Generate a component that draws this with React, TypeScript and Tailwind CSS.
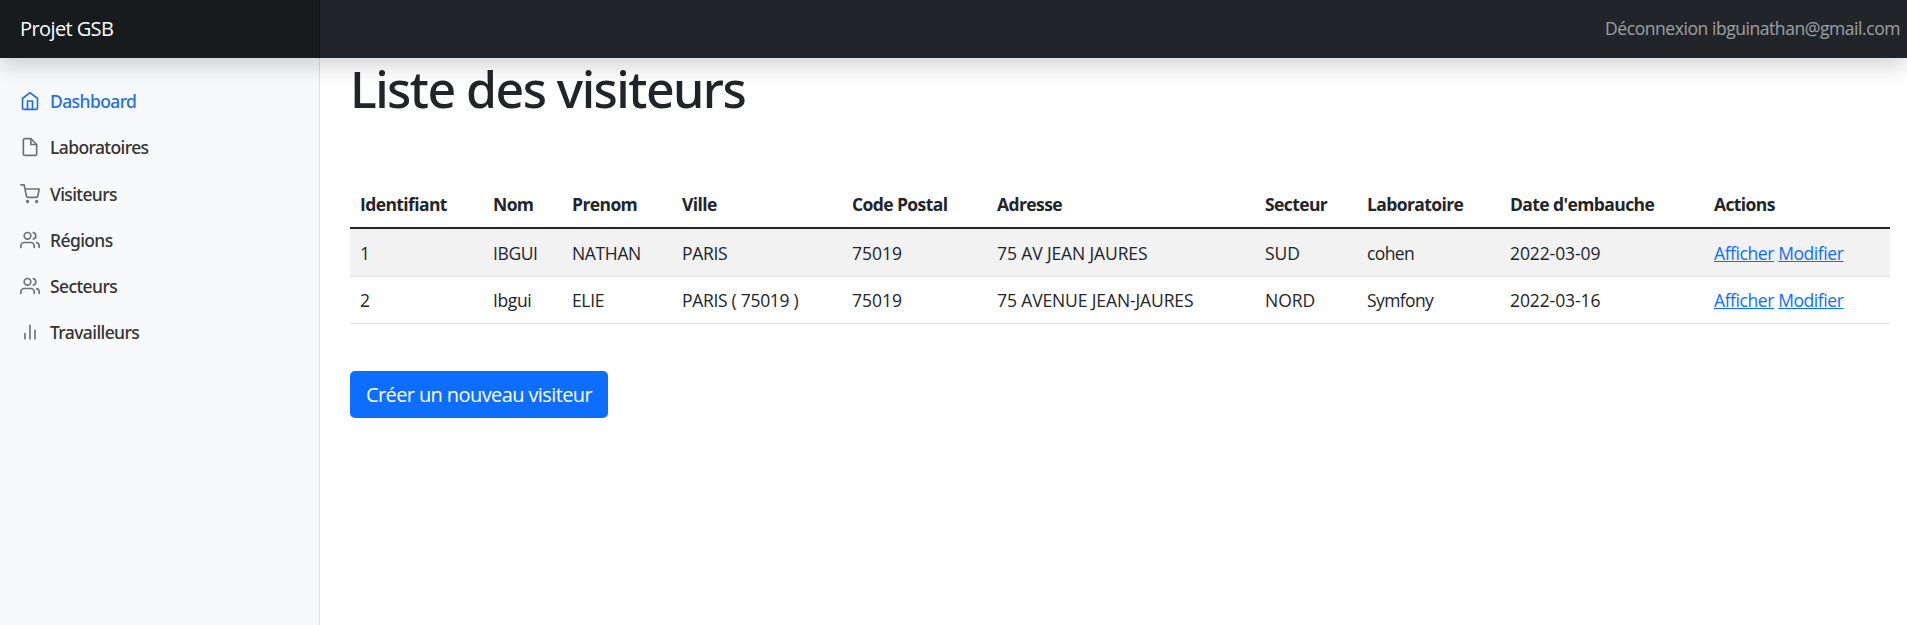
import type { ReactNode } from 'react';

const icons: Record<string, ReactNode> = {
  home: (
    <>
      <path d="M3 9l9-7 9 7v11a2 2 0 0 1-2 2H5a2 2 0 0 1-2-2z" />
      <polyline points="9 22 9 12 15 12 15 22" />
    </>
  ),
  file: (
    <>
      <path d="M13 2H6a2 2 0 0 0-2 2v16a2 2 0 0 0 2 2h12a2 2 0 0 0 2-2V9z" />
      <polyline points="13 2 13 9 20 9" />
    </>
  ),
  cart: (
    <>
      <circle cx="9" cy="21" r="1" />
      <circle cx="20" cy="21" r="1" />
      <path d="M1 1h4l2.68 13.39a2 2 0 0 0 2 1.61h9.72a2 2 0 0 0 2-1.61L23 6H6" />
    </>
  ),
  users: (
    <>
      <path d="M17 21v-2a4 4 0 0 0-4-4H5a4 4 0 0 0-4 4v2" />
      <circle cx="9" cy="7" r="4" />
      <path d="M23 21v-2a4 4 0 0 0-3-3.87" />
      <path d="M16 3.13a4 4 0 0 1 0 7.75" />
    </>
  ),
  chart: (
    <>
      <line x1="18" y1="20" x2="18" y2="10" />
      <line x1="12" y1="20" x2="12" y2="4" />
      <line x1="6" y1="20" x2="6" y2="14" />
    </>
  ),
};

function Icon({ name }: { name: string }) {
  return (
    <svg
      className="size-5 shrink-0"
      viewBox="0 0 24 24"
      fill="none"
      stroke="currentColor"
      strokeWidth="2"
      strokeLinecap="round"
      strokeLinejoin="round"
    >
      {icons[name]}
    </svg>
  );
}

const links = [
  { label: 'Dashboard', icon: 'home', active: true },
  { label: 'Laboratoires', icon: 'file' },
  { label: 'Visiteurs', icon: 'cart' },
  { label: 'Régions', icon: 'users' },
  { label: 'Secteurs', icon: 'users' },
  { label: 'Travailleurs', icon: 'chart' },
];

const columns = [
  { title: 'Identifiant', width: 'w-[133px]', tracking: '' },
  { title: 'Nom', width: 'w-[79px]', tracking: 'tracking-[-0.4px]' },
  { title: 'Prenom', width: 'w-[110px]', tracking: 'tracking-[-0.35px]' },
  { title: 'Ville', width: 'w-[170px]', tracking: 'tracking-[-0.3px]' },
  { title: 'Code Postal', width: 'w-[145px]', tracking: '' },
  { title: 'Adresse', width: 'w-[268px]', tracking: 'tracking-[-0.12px]' },
  { title: 'Secteur', width: 'w-[102px]', tracking: '' },
  { title: 'Laboratoire', width: 'w-[143px]', tracking: 'tracking-[-0.6px]' },
  { title: "Date d'embauche", width: 'w-[204px]', tracking: 'tracking-[-0.1px]' },
  { title: 'Actions', width: '', tracking: 'tracking-[-0.45px]' },
];

const rows = [
  ['1', 'IBGUI', 'NATHAN', 'PARIS', '75019', '75 AV JEAN JAURES', 'SUD', 'cohen', '2022-03-09'],
  ['2', 'Ibgui', 'ELIE', 'PARIS ( 75019 )', '75019', '75 AVENUE JEAN-JAURES', 'NORD', 'Symfony', '2022-03-16'],
];

export default function App() {
  return (
    <div className="flex h-[625px] flex-col overflow-hidden bg-white font-['Open_Sans',sans-serif] text-[17.5px] leading-[26.25px] text-[#212529]">
      <header className="relative z-10 flex h-[58px] shrink-0 items-center justify-between bg-[#212529] shadow-[0_10px_20px_rgba(0,0,0,0.15)]">
        <a className="flex h-full w-80 items-center bg-black/25 pb-px pl-5 text-xl tracking-[-0.6px] text-white shadow-[inset_-1px_0_0_rgba(0,0,0,0.25)]">
          Projet GSB
        </a>
        <a className="pr-[7px] pb-px tracking-[-0.44px] text-white/55">Déconnexion ibguinathan@gmail.com</a>
      </header>

      <div className="flex min-h-0 flex-1">
        <nav className="w-80 shrink-0 bg-[#f8f9fa] pt-[20.6px] font-['Noto_Sans',sans-serif] font-medium shadow-[inset_-1px_0_0_rgba(0,0,0,0.1)]">
          {links.map((link) => (
            <a
              key={link.label}
              className={`flex h-[46.25px] items-center gap-2.5 px-5 pb-px tracking-[-0.6px] ${link.active ? 'text-[#2470dc]' : 'text-[#333]'}`}
            >
              <span className={link.active ? 'text-[#2470dc]' : 'text-[#727272]'}>
                <Icon name={link.icon} />
              </span>
              {link.label}
            </a>
          ))}
        </nav>

        <main className="flex-1 pr-[17px] pl-[30px]">
          <h1 className="h-[123px] pt-px font-['Noto_Sans',sans-serif] text-[50px] leading-[60px] font-medium tracking-[-1.55px]">
            Liste des visiteurs
          </h1>
          <table className="w-full table-fixed border-collapse text-left">
            <thead>
              <tr className="h-[47px] border-b-2 border-[#212529]">
                {columns.map((col) => (
                  <th key={col.title} className={`${col.width} px-2.5 pt-px pb-0 font-bold tracking-[-0.6px] whitespace-nowrap`}>
                    {col.title}
                  </th>
                ))}
              </tr>
            </thead>
            <tbody>
              {rows.map((row) => (
                <tr key={row[0]} className="border-b border-[#dee2e6] odd:h-12 odd:bg-[#f2f2f2] even:h-[47px]">
                  {row.map((cell, i) => (
                    <td key={i} className={`px-2.5 pt-px pb-0 whitespace-nowrap ${columns[i].tracking}`}>
                      {cell}
                    </td>
                  ))}
                  <td className="px-2.5 pt-px pb-0 tracking-[-0.42px] whitespace-nowrap text-[#0d6efd]">
                    <a className="underline">Afficher</a> <a className="underline">Modifier</a>
                  </td>
                </tr>
              ))}
            </tbody>
          </table>
          <button className="mt-[47px] flex h-[47px] w-[258px] items-center justify-center rounded-[5px] bg-[#0d6efd] pt-px text-xl tracking-[-0.6px] whitespace-nowrap text-white">
            Créer un nouveau visiteur
          </button>
        </main>
      </div>
    </div>
  );
}
